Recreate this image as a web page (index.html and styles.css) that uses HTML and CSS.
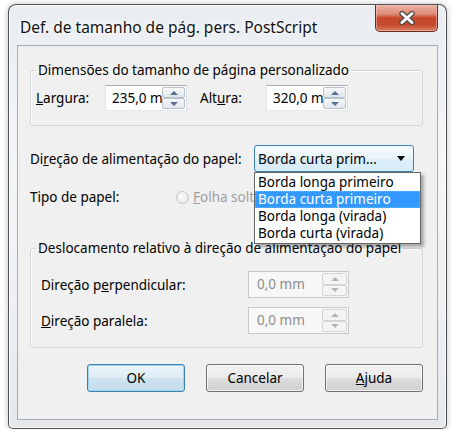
FILE: index.html
```html
<!DOCTYPE html>
<html lang="pt">
<head>
    <meta charset="UTF-8">
    <title>Def. de tamanho de pág. pers. PostScript</title>
    <link rel="stylesheet" href="styles.css">
</head>
<body>
    <div class="window">
        <div class="titlebar">
            <span class="title">Def. de tamanho de pág. pers. PostScript</span>
            <button class="close-btn" aria-label="Fechar">
                <svg width="18" height="14" viewBox="0 0 18 14">
                    <path d="M4 2.5 L14 11.5 M14 2.5 L4 11.5" stroke="#4a4a4a" stroke-width="5.5" stroke-linecap="round"/>
                    <path d="M4 2.5 L14 11.5 M14 2.5 L4 11.5" stroke="#ffffff" stroke-width="3" stroke-linecap="round"/>
                </svg>
            </button>
        </div>

        <div class="client">
            <fieldset class="group group-size">
                <legend>Dimensões do tamanho de página personalizado</legend>
                <div class="row">
                    <label class="lbl lbl-width"><u>L</u>argura:</label>
                    <div class="spin-field field-width">
                        <span class="value">235,0 mm</span>
                        <span class="spin"><span class="up"></span><span class="down"></span></span>
                    </div>
                    <label class="lbl lbl-height">Alt<u>u</u>ra:</label>
                    <div class="spin-field field-height">
                        <span class="value">320,0 mm</span>
                        <span class="spin"><span class="up"></span><span class="down"></span></span>
                    </div>
                </div>
            </fieldset>

            <div class="row row-feed">
                <label class="lbl lbl-feed">Di<u>r</u>eção de alimentação do papel:</label>
                <div class="combo">
                    <span class="combo-text">Borda curta prim...</span>
                    <span class="combo-arrow"></span>
                    <ul class="dropdown">
                        <li>Borda longa primeiro</li>
                        <li class="selected">Borda curta primeiro</li>
                        <li>Borda longa (virada)</li>
                        <li>Borda curta (virada)</li>
                    </ul>
                </div>
            </div>

            <div class="row row-type">
                <label class="lbl lbl-type">Tipo de papel:</label>
                <span class="radio"></span>
                <span class="radio-text"><u>F</u>olha solta</span>
            </div>

            <fieldset class="group group-offset">
                <legend>Deslocamento relativo à direção de alimentação do papel</legend>
                <div class="row offset-row">
                    <label class="lbl lbl-offset">Direção p<u>e</u>rpendicular:</label>
                    <div class="spin-field field-offset disabled">
                        <span class="value">0,0 mm</span>
                        <span class="spin"><span class="up"></span><span class="down"></span></span>
                    </div>
                </div>
                <div class="row offset-row">
                    <label class="lbl lbl-offset"><u>D</u>ireção paralela:</label>
                    <div class="spin-field field-offset disabled">
                        <span class="value">0,0 mm</span>
                        <span class="spin"><span class="up"></span><span class="down"></span></span>
                    </div>
                </div>
            </fieldset>

            <div class="buttons">
                <button class="btn btn-default">OK</button>
                <button class="btn">Cancelar</button>
                <button class="btn"><u>A</u>juda</button>
            </div>
        </div>
    </div>
</body>
</html>
```

FILE: styles.css
```css
body {
    margin: 0;
    padding: 4px 0 0 8px;
    background-color: #ffffff;
    font-family: "Noto Sans", "Open Sans", sans-serif;
    font-size: 13.5px;
    color: #000000;
}

.window {
    box-sizing: border-box;
    width: 439px;
    height: 425px;
    padding: 0 8px 8px 8px;
    border: 1px solid rgba(30, 30, 30, 0.75);
    border-radius: 8px 8px 5px 5px;
    background: linear-gradient(to bottom, #e9edf1 0%, #f5f6f8 40%, #e6e9ec 100%);
    box-shadow: 0 0 6px rgba(0, 0, 0, 0.25), inset 0 0 0 1px rgba(255, 255, 255, 0.8);
}

.titlebar {
    display: flex;
    justify-content: space-between;
    align-items: flex-start;
    height: 40px;
}

.title {
    margin: 13px 0 0 3px;
    font-size: 15.5px;
    line-height: 18px;
    color: #111111;
    text-shadow: 0 0 6px #ffffff, 0 0 3px #ffffff;
}

.close-btn {
    display: flex;
    align-items: center;
    justify-content: center;
    width: 63px;
    height: 27px;
    padding: 0;
    border: 1px solid #6e2a1c;
    border-top: none;
    border-radius: 0 0 5px 5px;
    background: linear-gradient(to bottom, #eab1a3 0%, #de8b76 35%, #c8472b 50%, #c44a2d 75%, #d98068 100%);
    box-shadow: inset 0 0 0 1px rgba(255, 210, 200, 0.5);
}

.client {
    box-sizing: border-box;
    display: flex;
    flex-direction: column;
    height: 375px;
    padding: 0 14px 0 12px;
    border: 1px solid #a9adb2;
    background-color: #f0f0f0;
}

.group {
    margin: 0;
    padding: 0;
    border: 1px solid #d2d6da;
    border-radius: 3px;
    box-shadow: inset 1px 1px 0 #ffffff;
}

.group legend {
    margin-left: 5px;
    padding: 0 2px;
    line-height: 16px;
}

.group-size {
    margin-top: 16px;
    padding: 7px 0 14px 0;
}

.row {
    display: flex;
    align-items: center;
}

.lbl {
    flex-shrink: 0;
}

.group-size .row {
    height: 26px;
    margin-left: 5px;
}

.lbl-width {
    width: 69px;
}

.lbl-height {
    width: 66px;
    margin-left: 13px;
}

.spin-field {
    box-sizing: border-box;
    display: flex;
    height: 26px;
    border: 1px solid #abadb3;
    border-color: #abadb3 #dbdfe6 #e3e9ef #e2e3ea;
    background-color: #ffffff;
}

.spin-field .value {
    flex: 1;
    overflow: hidden;
    white-space: nowrap;
    padding-left: 6px;
    line-height: 24px;
}

.field-width,
.field-height {
    width: 82px;
}

.spin {
    display: flex;
    flex-direction: column;
    width: 23px;
    padding: 1px 1px 1px 0;
}

.spin span {
    flex: 1;
    position: relative;
    border: 1px solid #b8c2cc;
    border-radius: 2px;
    background: linear-gradient(to bottom, #f6f8fa, #e2e7ec);
}

.spin span::after {
    content: "";
    position: absolute;
    left: 50%;
    top: 50%;
    margin: -2px 0 0 -4px;
    border-left: 4px solid transparent;
    border-right: 4px solid transparent;
}

.spin .up::after {
    border-bottom: 4px solid #5b6f93;
}

.spin .down::after {
    border-top: 4px solid #5b6f93;
}

.row-feed {
    height: 27px;
    margin-top: 19px;
}

.lbl-feed {
    width: 224px;
}

.combo {
    box-sizing: border-box;
    position: relative;
    display: flex;
    align-items: center;
    width: 160px;
    height: 27px;
    padding-left: 3px;
    border: 1px solid #3c7fb1;
    border-radius: 3px;
    background: linear-gradient(to bottom, #f4fafd 0%, #eaf5fc 50%, #ddeef9 51%, #d5ebf9 100%);
}

.combo-text {
    flex: 1;
    white-space: nowrap;
}

.combo-arrow {
    width: 0;
    height: 0;
    margin-right: 8px;
    border-left: 4px solid transparent;
    border-right: 4px solid transparent;
    border-top: 5px solid #000000;
}

.dropdown {
    position: absolute;
    top: 26px;
    left: -1px;
    z-index: 10;
    width: 165px;
    margin: 0;
    padding: 1px 0;
    list-style: none;
    border: 1px solid #646464;
    background-color: #ffffff;
    box-shadow: 3px 3px 3px rgba(0, 0, 0, 0.3);
}

.dropdown li {
    height: 17px;
    padding-left: 3px;
    line-height: 17px;
    white-space: nowrap;
}

.dropdown li.selected {
    background-color: #3399ff;
    color: #ffffff;
    outline: 1px dotted #e8a040;
    outline-offset: -1px;
}

.row-type {
    height: 20px;
    margin-top: 15px;
}

.lbl-type {
    width: 146px;
}

.radio {
    box-sizing: border-box;
    flex-shrink: 0;
    width: 13px;
    height: 13px;
    border: 1px solid #c3c3c3;
    border-radius: 50%;
    background: radial-gradient(circle at 40% 40%, #fdfdfd, #e2e2e2);
}

.radio-text {
    margin-left: 4px;
    color: #a0a0a0;
    white-space: nowrap;
}

.group-offset {
    margin-top: 33px;
    padding: 15px 0 13px 0;
}

.offset-row {
    height: 27px;
    margin-left: 10px;
}

.offset-row + .offset-row {
    margin-top: 9px;
}

.lbl-offset {
    width: 207px;
}

.field-offset {
    width: 101px;
    height: 27px;
}

.spin-field.disabled {
    border: 1px solid #c9c9c9;
    background-color: #f7f7f7;
    color: #8d8d8d;
}

.spin-field.disabled .value {
    padding-left: 8px;
    line-height: 25px;
}

.spin-field.disabled .spin {
    width: 25px;
}

.spin-field.disabled .spin span {
    border-color: #d4d4d4;
    background: #f4f4f4;
}

.spin-field.disabled .up::after {
    border-bottom-color: #b5b5b5;
}

.spin-field.disabled .down::after {
    border-top-color: #b5b5b5;
}

.buttons {
    display: flex;
    justify-content: flex-end;
    gap: 21px;
    margin-top: 16px;
}

.btn {
    box-sizing: border-box;
    width: 98px;
    height: 28px;
    padding: 0;
    border: 1px solid #707070;
    border-radius: 3px;
    background: linear-gradient(to bottom, #f2f2f2 0%, #ebebeb 50%, #dddddd 51%, #cfcfcf 100%);
    box-shadow: inset 0 0 0 1px rgba(255, 255, 255, 0.7);
    font-family: inherit;
    font-size: 13.5px;
    color: #000000;
}

.btn-default {
    border-color: #3c7fb1;
    background: linear-gradient(to bottom, #eaf4fa 0%, #dfedf6 50%, #cfe3f0 51%, #c4dcec 100%);
    box-shadow: inset 0 0 0 1px #9fd4f3;
}
```
